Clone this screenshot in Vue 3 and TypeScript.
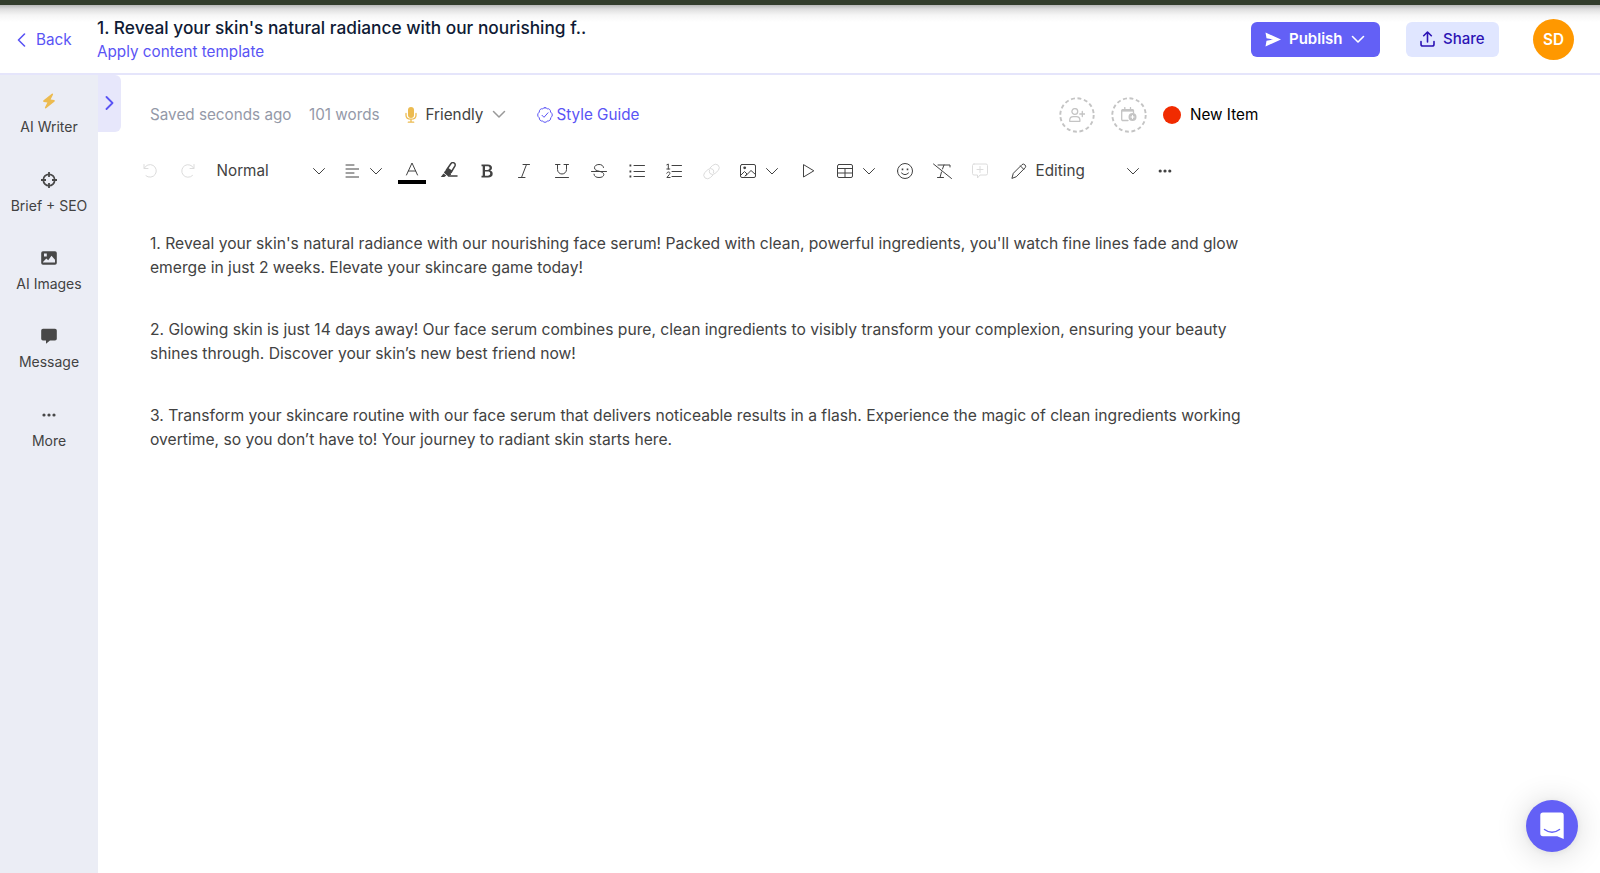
<script setup lang="ts">
interface Tool {
    name: string;
    kind?: "split" | "color" | "select";
    label?: string;
    muted?: boolean;
    size?: number;
    strokes?: string[];
    fills?: string[];
}

const chevron = "M1.5 1.5 7 7l5.500-5.500";

const navItems = [
    { label: "AI Writer", icon: "bolt" },
    { label: "Brief + SEO", icon: "target" },
    { label: "AI Images", icon: "image" },
    { label: "Message", icon: "message" },
    { label: "More", icon: "more" },
];

const tools: Tool[] = [
    { name: "undo", muted: true, strokes: ["M2 1.500v4h4", "M2.200 5.300A6.300 6.300 0 1 1 4 12.800"] },
    { name: "redo", muted: true, strokes: ["M14 1.500v4h-4", "M13.800 5.300A6.300 6.300 0 1 0 12.500 12.500"] },
    { name: "style", kind: "select", label: "Normal" },
    { name: "align", kind: "split", strokes: ["M3 2h8M3 6h13M3 10h8M3 14h13"] },
    { name: "color", kind: "color", strokes: ["M2.500 13 8 1l5.500 12M4.300 9h7.400"] },
    {
        name: "highlight",
        size: 18,
        strokes: ["M6.500 8 11 1.500q1.300-1.600 3-.6t1 2.900L11 10.500", "M6 9 4.800 10.500l3.500 2.800 2-1", "M8.500 14h8.500"],
        fills: ["M6.300 7.800 8 5.800l4.500 3-2 3.200-2.500 1.500-3.300-2.600z", "M3.500 11.500.8 14.900h3.500l2-1.500z"],
    },
    {
        name: "bold",
        fills: [
            "M2.500 1.500h6.300c2.800 0 4.200 1.300 4.200 3.200 0 1.400-.7 2.400-2 2.900 1.700.4 2.700 1.500 2.700 3.100 0 2.500-1.700 3.800-4.700 3.800H2.500v-1.700h1.200V3.200H2.500zM6 3.300v3.600h2.500c1.300 0 2.100-.6 2.100-1.800s-.8-1.800-2.200-1.800zM6 8.600v4.100h2.700c1.600 0 2.500-.7 2.500-2.100s-.9-2-2.500-2z",
        ],
    },
    { name: "italic", strokes: ["M7 1.500h6.500M2.500 14.500H9M10.500 1.500l-5 13"] },
    { name: "underline", strokes: ["M1.500 1.500h4.500M10 1.500h4.500M3.500 1.500v5a4.500 4.500 0 0 0 9 0v-5M1.500 14.500h13"] },
    { name: "strike", strokes: ["M12.500 4.500C12 2.300 10.400 1.500 8 1.500 5.300 1.500 3.500 2.800 3.500 4.800 3.500 7 5.500 7.500 8 8.200s4.800 1.400 4.800 3.300-1.900 3-4.800 3-4.800-1-5-3.300", "M.5 8.500h15"] },
    { name: "bullets", strokes: ["M5 2.500h10.500M5 8.500h10.500M5 13.500h10.500"], fills: ["M.5 1.600h1.800v1.800H.5zM.5 7.600h1.800v1.800H.5zM.5 12.600h1.800v1.800H.5z"] },
    { name: "numbers", strokes: ["M6 2.500h9.500M6 8.500h9.500M6 13.500h9.500", "M.8 1.800 2.300 1v5M.8 6h3M.8 10.200q.5-1.200 1.600-1.200c2.200 0 1.700 2 .5 3L.9 14.500h3.200"] },
    { name: "link", size: 19, muted: true, strokes: ["m8 6 2.500-2.500q2.700-2.400 5.500-.5 2.500 2.600.4 5.300L13 11.500q-2.700 2-5 0-1.300-1.500-.5-3.200", "m11 13-2.500 2.500q-2.700 2.400-5.500.5Q.5 13.400 2.600 10.700L6 7.500q2.700-2 5 0 1.300 1.500.5 3.200"] },
    { name: "picture", kind: "split", strokes: ["M2 1.500h12q1.500 0 1.500 1.500v10q0 1.500-1.500 1.500H2Q.5 14.500.5 13V3q0-1.500 1.500-1.500z", "m1 12 3.500-3.500L7 11l-2 2M6 12.500l5-5 4.500 4"], fills: ["M3.300 4.800a1.400 1.400 0 1 1 2.800 0 1.400 1.400 0 0 1-2.800 0z"] },
    { name: "play", strokes: ["M3.500 2v12l10-6z"] },
    { name: "table", kind: "split", strokes: ["M2 1.500h12q1.500 0 1.500 1.500v10q0 1.500-1.500 1.500H2Q.5 14.500.5 13V3q0-1.500 1.500-1.500z", "M.5 5.500h15M.5 10h15M8 5.500v9"] },
    { name: "emoji", strokes: ["M.5 8a7.500 7.500 0 1 1 15 0A7.500 7.500 0 0 1 .5 8z", "M4.500 10q3.500 3.500 7 0"], fills: ["M4.700 5.500h1.600v1.700H4.700zM9.700 5.500h1.600v1.700H9.700z"] },
    { name: "clear", size: 19, strokes: ["M.5 2 18.500 16.500M5 3h12v2M11 3l-1.500 4M8.500 10 7 15.500M4.500 15.500h6"] },
    { name: "comment", muted: true, strokes: ["M2 1h12q1.500 0 1.500 1.500v8Q15.500 12 14 12H8l-2.500 3v-3H2Q.5 12 .5 10.500v-8Q.5 1 2 1z", "M8 3.500v6M5 6.500h6"] },
    { name: "mode", kind: "select", label: "Editing", strokes: ["M1 15 2.300 10.300 11 1.600q1.400-1.200 2.900.2t.3 2.900L5.500 13.500z", "m9.500 3 3.200 3.300"] },
    { name: "overflow", fills: ["M1.600 8a1.600 1.600 0 1 1 3.200 0 1.600 1.600 0 0 1-3.200 0zM6.400 8a1.600 1.600 0 1 1 3.200 0 1.600 1.600 0 0 1-3.200 0zM11.200 8a1.600 1.600 0 1 1 3.200 0 1.600 1.600 0 0 1-3.200 0z"] },
];

const paragraphs = [
    [
        "1. Reveal your skin's natural radiance with our nourishing face serum! Packed with clean, powerful ingredients, you'll watch fine lines fade and glow",
        "emerge in just 2 weeks. Elevate your skincare game today!",
    ],
    [
        "2. Glowing skin is just 14 days away! Our face serum combines pure, clean ingredients to visibly transform your complexion, ensuring your beauty",
        "shines through. Discover your skin’s new best friend now!",
    ],
    [
        "3. Transform your skincare routine with our face serum that delivers noticeable results in a flash. Experience the magic of clean ingredients working",
        "overtime, so you don’t have to! Your journey to radiant skin starts here.",
    ],
];
</script>

<template>
    <div class="app">
        <div class="strip"></div>
        <header class="header">
            <a class="back">
                <svg width="9" height="14" viewBox="0 0 9 14"><path d="M7.500 1 1.500 7l6 6" /></svg>
                <span>Back</span>
            </a>
            <div class="titles">
                <h1 class="title">1. Reveal your skin's natural radiance with our nourishing f..</h1>
                <a class="template">Apply content template</a>
            </div>
            <button class="publish">
                <svg width="16" height="15" viewBox="0 0 16 15"><path d="M.5.500 16 7.500.5 14.500 1.500 8.700 8 7.500 1.500 6.300z" fill="currentColor" /></svg>
                <span>Publish</span>
                <svg class="line" width="14" height="9" viewBox="0 0 14 9"><path :d="chevron" /></svg>
            </button>
            <button class="share">
                <svg class="line" width="15" height="16" viewBox="0 0 15 16">
                    <path d="M7.500 11V1M3.700 4.700 7.500 1l3.800 3.700M1 10.500v2.700q0 1.800 1.800 1.800h9.400q1.800 0 1.800-1.800v-2.700" />
                </svg>
                <span>Share</span>
            </button>
            <div class="avatar">SD</div>
        </header>

        <div class="body">
            <nav class="sidebar">
                <a v-for="item in navItems" :key="item.label" class="nav-item" :data-icon="item.icon">
                    <svg width="16" height="16" viewBox="0 0 16 16">
                        <path v-if="item.icon === 'bolt'" d="M10.800.700 2.300 7.600q-.8 1 .5 1.400l3.600.6-2.500 4.900q-.1 1.300 1.200.8l8.500-6.800q.8-1.100-.5-1.500L9.600 6.400l2.500-4.900q0-1.400-1.300-.8z" />
                        <template v-else-if="item.icon === 'target'">
                            <circle cx="8" cy="8" r="5.700" class="ring" />
                            <path d="M7.100 0h1.800v5H7.100zM7.100 11h1.800v5H7.100zM0 7.100h5v1.800H0zM11 7.100h5v1.800h-5z" />
                        </template>
                        <template v-else-if="item.icon === 'image'">
                            <path fill-rule="evenodd" d="M2 1.300h12q1.800 0 1.800 1.700v10q0 1.700-1.800 1.700H2Q.2 14.700.2 13V3Q.2 1.300 2 1.300zM3 3.600v2.800h2.800V3.600zM2 12.500h12v-2.700l-3.500-4-3.300 4.400-1.900-1.700L2 12z" />
                        </template>
                        <path v-else-if="item.icon === 'message'" d="M2 .8h12q1.800 0 1.800 1.700v8.300q0 1.700-1.800 1.700H9L5 15.800v-3.300H2q-1.800 0-1.800-1.700V2.500Q.2.800 2 .8z" />
                        <template v-else>
                            <circle cx="3" cy="8" r="1.600" />
                            <circle cx="8" cy="8" r="1.600" />
                            <circle cx="13" cy="8" r="1.600" />
                        </template>
                    </svg>
                    <span>{{ item.label }}</span>
                </a>
            </nav>

            <button class="expand">
                <svg width="9" height="14" viewBox="0 0 9 14"><path d="m1.500 1 6 6-6 6" /></svg>
            </button>

            <main class="editor">
                <div class="meta">
                    <span class="saved">Saved seconds ago</span>
                    <span class="words">101 words</span>
                    <span class="tone">
                        <svg width="12" height="16" viewBox="0 0 12 16">
                            <rect x="3" y="0" width="6" height="11" rx="3" fill="#ecbb50" />
                            <path d="M1 6.500v1.700q0 4 5 4t5-4V6.500M6 12.500V15M3.300 15.200h5.400" stroke="#ecbb50" stroke-width="1.300" fill="none" />
                        </svg>
                        <span class="tone-name">Friendly</span>
                        <svg class="tone-arrow" width="14" height="9" viewBox="0 0 14 9"><path :d="chevron" /></svg>
                    </span>
                    <a class="guide">
                        <svg width="16" height="16" viewBox="0 0 16 16">
                            <path d="M8 .7q1.500 0 2.200 1.100 1.400-.4 2.500.7t.8 2.500Q15.300 6.300 15.300 8t-1.600 2.700q.2 1.500-.8 2.500t-2.700.9Q9.300 15.300 8 15.300t-2.200-1.200q-1.600.2-2.600-.8t-.9-2.500Q.7 9.700.7 8t1.600-2.900q-.2-1.500.9-2.600t2.600-.7Q6.600.7 8 .7z" />
                            <path d="m5 8.300 2 2 4-4.500" />
                        </svg>
                        <span>Style Guide</span>
                    </a>
                    <div class="status">
                        <span class="round">
                            <svg class="dash" width="36" height="36" viewBox="0 0 36 36"><circle cx="18" cy="18" r="16.700" /></svg>
                            <svg width="16" height="14" viewBox="0 0 16 14">
                                <circle cx="5.800" cy="3.500" r="2.900" />
                                <path d="M.7 13.300v-1q0-3.600 3.600-3.600h3q3.600 0 3.600 3.600v1zM13.300 3.500v5M10.800 6h5" />
                            </svg>
                        </span>
                        <span class="round">
                            <svg class="dash" width="36" height="36" viewBox="0 0 36 36"><circle cx="18" cy="18" r="16.700" /></svg>
                            <svg width="16" height="15" viewBox="0 0 16 15">
                                <path d="M7 13.500H2q-1.300 0-1.300-1.300V3.500h11.800V6M3.800.500V3M9.500.500V3" />
                                <path d="M.7 2h11.800v2.500H.7z" fill="#c4c4c4" stroke="none" />
                                <circle cx="11.500" cy="10" r="4" fill="#c4c4c4" stroke="none" />
                                <path d="M11.500 8.500v3M10 10h3" stroke="#fff" stroke-width="1" />
                            </svg>
                        </span>
                        <span class="dot"></span>
                        <span class="state">New Item</span>
                    </div>
                </div>

                <div class="toolbar">
                    <button v-for="tool in tools" :key="tool.name" class="tool" :class="[tool.kind, tool.name, { muted: tool.muted }]">
                        <svg v-if="tool.strokes || tool.fills" :width="tool.size ?? 16" :height="tool.size ?? 16" :viewBox="`0 0 ${tool.size ?? 16} ${tool.size ?? 16}`">
                            <path v-for="d in tool.fills" :key="d" :d="d" class="solid" fill-rule="evenodd" />
                            <path v-for="d in tool.strokes" :key="d" :d="d" class="stroke" />
                        </svg>
                        <span v-if="tool.kind === 'color'" class="swatch"></span>
                        <span v-if="tool.label" class="label">{{ tool.label }}</span>
                        <svg v-if="tool.kind === 'split' || tool.kind === 'select'" class="arrow" width="14" height="9" viewBox="0 0 14 9">
                            <path :d="chevron" class="stroke" />
                        </svg>
                    </button>
                </div>

                <article class="document">
                    <p v-for="(lines, i) in paragraphs" :key="i">
                        <span v-for="line in lines" :key="line" class="text-line">{{ line }}</span>
                    </p>
                </article>
            </main>
        </div>

        <button class="chat">
            <svg width="24" height="28" viewBox="0 0 24 28">
                <path d="M3 .5h18q2.700 0 2.700 2.700V27l-6.500-2.700H3Q.3 24.300.3 21.500V3.200Q.3.500 3 .5z" fill="#fff" />
                <path d="M4.500 17.500q7.500 5.500 15 0" fill="none" stroke="#6360f6" stroke-width="1.500" stroke-linecap="round" />
            </svg>
        </button>
    </div>
</template>

<style>
body {
    margin: 0;
    overflow: hidden;
}
</style>

<style scoped>
.app {
    display: flex;
    flex-direction: column;
    height: 873px;
    background: #fff;
    color: #424242;
    font: 15.25px/24px Inter, sans-serif;
}

button {
    padding: 0;
    border: 0;
    background: none;
    color: inherit;
    font: inherit;
}

svg {
    flex: none;
    fill: none;
    stroke-linecap: round;
    stroke-linejoin: round;
}

span {
    white-space: nowrap;
}

.strip {
    flex: none;
    height: 5px;
    background: #333d2c;
}

.header {
    display: flex;
    flex: none;
    align-items: center;
    box-sizing: border-box;
    height: 70px;
    padding: 0 26px 0 17px;
    border-bottom: 2px solid #e5e5fb;
    background: linear-gradient(#b8b8b8 0, #dedede 4px, #f5f5f5 10px, #fff 17px);
}

.back {
    display: flex;
    align-items: center;
    width: 80px;
    padding-top: 1px;
    gap: 10px;
    color: #5a54f5;

    & svg {
        stroke: currentColor;
        stroke-width: 1.6;
    }
}

.titles {
    flex: 1;
    padding-top: 2px;
}

.title {
    margin: 0;
    color: #0f1b35;
    font-size: 17.3px;
    font-weight: 500;
    line-height: 24px;
}

.template {
    display: block;
    color: #5a54f5;
}

.publish,
.share {
    display: flex;
    align-items: center;
    box-sizing: border-box;
    height: 35px;
    border-radius: 6px;
    font-size: 15px;
    font-weight: 500;
}

.line {
    stroke: currentColor;
    stroke-width: 1.6;
}

.publish {
    width: 129px;
    margin-right: 26px;
    padding-left: 14px;
    gap: 8px;
    background: #6360f6;
    color: #fff;
    font-weight: 600;
}

.share {
    width: 93px;
    margin-right: 34px;
    padding-left: 14px;
    gap: 8px;
    background: #e0e6ff;
    color: #2c13b5;
}

.avatar {
    width: 41px;
    border-radius: 50%;
    background: #ff9800;
    color: #fff;
    font-weight: 600;
    line-height: 41px;
    text-align: center;
}

.body {
    display: flex;
    flex: 1;
    align-items: flex-start;
    min-height: 0;
}

.sidebar {
    display: flex;
    flex: none;
    flex-direction: column;
    align-self: stretch;
    gap: 36.4px;
    box-sizing: border-box;
    width: 98px;
    padding-top: 18.2px;
    background: #ebedf5;
}

.nav-item {
    display: flex;
    flex-direction: column;
    align-items: center;
    gap: 10px;
    font-size: 14px;
    line-height: 16px;

    & svg {
        fill: #484848;
    }

    &[data-icon="bolt"] svg {
        fill: #ecbb50;
    }
}

.ring {
    fill: none;
    stroke: #484848;
    stroke-width: 1.7;
}

.expand {
    display: flex;
    flex: none;
    align-items: center;
    justify-content: center;
    box-sizing: border-box;
    width: 23px;
    height: 57px;
    padding-bottom: 1px;
    border-radius: 0 6px 6px 0;
    background: #e7e7fb;

    & svg {
        stroke: #5a54f5;
        stroke-width: 1.8;
    }
}

.editor {
    flex: none;
    width: 1137px;
    padding-top: 19.5px;
}

.meta {
    display: flex;
    align-items: center;
    height: 40px;
    padding-left: 29px;
}

.saved,
.words {
    color: #9499a8;
}

.saved {
    width: 159px;
}

.words {
    width: 96px;
}

.tone {
    display: flex;
    align-items: center;
    width: 132px;
}

.tone-name {
    width: 58px;
    margin: 0 8.5px 0 8.5px;
}

.tone-arrow {
    stroke: #999;
    stroke-width: 1.5;
}

.guide {
    display: flex;
    align-items: center;
    gap: 3.5px;
    color: #5a54f5;

    & svg {
        stroke: currentColor;
    }
}

.status {
    display: flex;
    flex: 1;
    align-items: center;
    justify-content: flex-end;
}

.round {
    display: grid;
    place-items: center;
    width: 36px;
    height: 36px;
    margin-right: 16px;
    stroke: #c4c4c4;
    stroke-width: 1.3;

    & > svg {
        grid-area: 1 / 1;
    }
}

.dash {
    stroke-width: 1.9;
    stroke-dasharray: 3.900 2.658;
    stroke-linecap: butt;
}

.dot {
    width: 18px;
    height: 18px;
    margin-right: 9px;
    border-radius: 50%;
    background: #f12b00;
}

.state {
    width: 68px;
    color: #000;
}

.toolbar {
    display: flex;
    align-items: center;
    height: 40px;
    margin-top: 16.5px;
    padding-left: 10.5px;
}

.tool {
    display: flex;
    flex: none;
    align-items: center;
    justify-content: center;
    width: 37.5px;
    height: 34px;

    &.muted {
        color: #dcdcdc;
    }

    &.split {
        justify-content: flex-start;
        box-sizing: border-box;
        width: 59px;
        padding-left: 9px;
        gap: 9px;
    }

    &.align {
        gap: 10px;
    }

    &.table {
        padding-left: 9.5px;
    }

    &.select {
        justify-content: flex-start;
        box-sizing: border-box;
        width: 127.5px;
        padding-left: 10px;
    }

    &.mode {
        width: 148px;
        padding-left: 12px;
        gap: 9px;
    }

    &.color {
        flex-direction: column;
        gap: 2px;
        padding-top: 4px;
        box-sizing: border-box;
    }

    & .arrow {
        margin-left: auto;
    }

    &.split .arrow {
        margin-left: 0;
    }
}

.style .arrow {
    margin-right: 8px;
}

.mode .arrow {
    margin-right: 6.5px;
}

.swatch {
    width: 28px;
    height: 4px;
    background: #000;
}

.stroke {
    stroke: currentColor;
    stroke-width: 1;
}

.highlight .stroke {
    stroke-width: 1.5;
}

.solid {
    fill: currentColor;
}

.document {
    padding: 41px 0 0 29px;
    color: #424242;
    font-size: 15.655px;

    & p {
        margin: 0 0 37.8px;
    }
}

.text-line {
    display: block;
}

.chat {
    position: absolute;
    top: 799.5px;
    left: 1526px;
    display: grid;
    place-items: center;
    width: 52px;
    height: 52px;
    border-radius: 50%;
    background: #6360f6;
    box-shadow: 0 1px 6px rgb(0 0 0 / 0.06), 0 2px 32px rgb(0 0 0 / 0.16);
}
</style>
